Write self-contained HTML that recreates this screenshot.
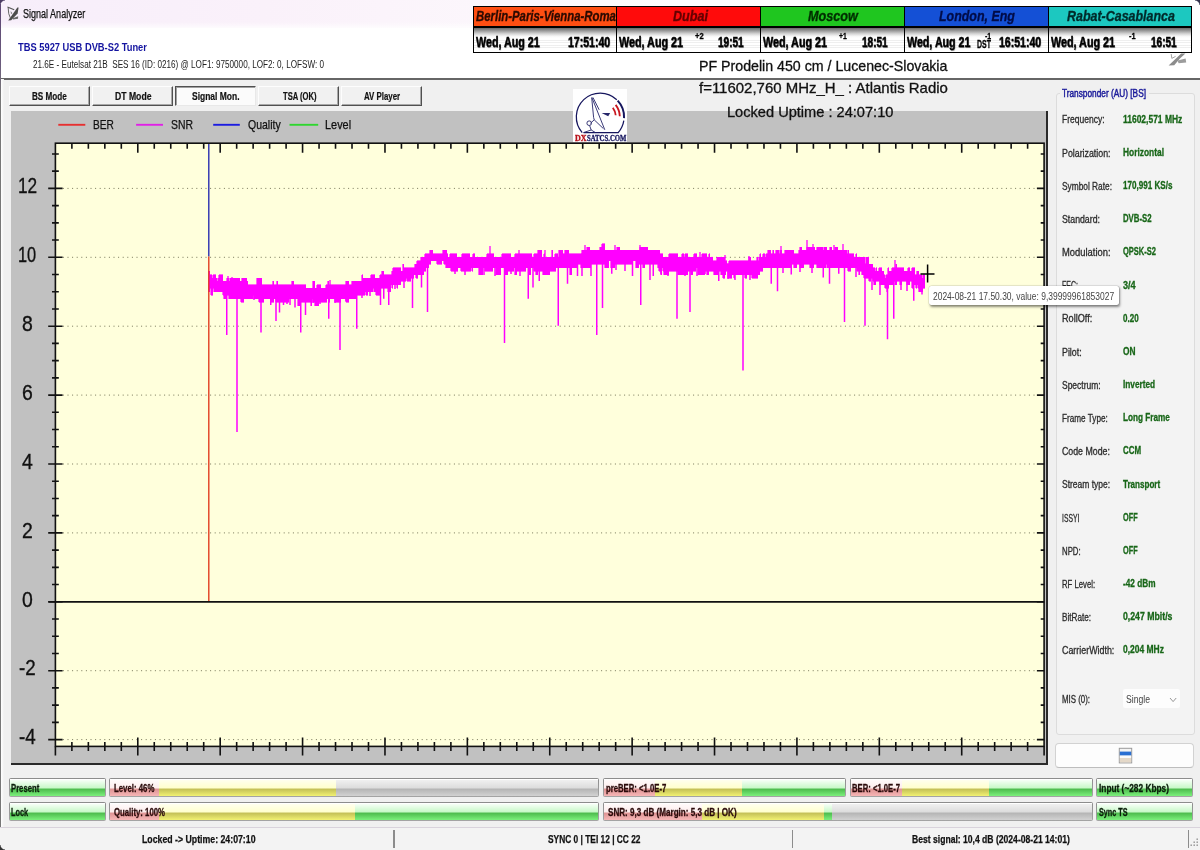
<!DOCTYPE html>
<html lang="en"><head><meta charset="utf-8"><title>Signal Analyzer</title>
<style>
html,body{margin:0;padding:0;}
body{width:1200px;height:850px;overflow:hidden;background:#f0f0f0;font-family:"Liberation Sans",sans-serif;}
#win{position:relative;width:1200px;height:850px;overflow:hidden;background:#f0f0f0;filter:blur(0.35px);}
.b{position:absolute;box-sizing:border-box;}
.t{position:absolute;white-space:pre;line-height:1;transform-origin:0 50%;}
svg{position:absolute;left:0;top:0;}

</style></head>
<body>
<div id="win">
<div class="b" style="left:0.00px;top:0.00px;width:1200.00px;height:79.00px;background:#fff;"></div>
<div class="b" style="left:0.00px;top:0.00px;width:1200.00px;height:28.00px;background:linear-gradient(90deg,#f7eefa 0%,#faf1fa 22%,#fcf7fc 42%,#ffffff 66%);"></div>
<div class="b" style="left:0.00px;top:22.00px;width:1200.00px;height:8.00px;background:linear-gradient(180deg,rgba(255,255,255,0),#fff);"></div>
<div class="b" style="left:0.00px;top:0.00px;width:5.00px;height:5.00px;background:radial-gradient(circle at 5px 5px,rgba(0,0,0,0) 3.8px,#4b3a63 5px);"></div>
<div class="b" style="left:1195.00px;top:0.00px;width:5.00px;height:5.00px;background:radial-gradient(circle at 0px 5px,rgba(0,0,0,0) 3.8px,#33334d 5px);"></div>
<svg width="30" height="30" viewBox="0 0 30 30" style="left:0;top:0"><path d="M8.2,20.4 L17.4,7.4 L18.6,7.6 L17.6,13.4 L11.2,20.2 Z" fill="#4c4c4c"/><path d="M7.4,7 L14.2,9.8" stroke="#555" stroke-width="1.2" fill="none"/><path d="M8.2,8 Q8.2,14.5 10.4,18" stroke="#666" stroke-width="1" fill="none"/><path d="M12.5,18.2 L18.2,16.2 L18,18.8 L13,19.4 Z" fill="#6a6a6a"/><path d="M10.6,11 L12.4,13.2 L11,14 Z" fill="#777"/></svg>
<span class="t" style="left:22.50px;top:8.44px;font-size:12px;color:#111;transform:scaleX(0.7520);-webkit-text-stroke:0.25px #111;">Signal Analyzer</span>
<span class="t" style="left:17.80px;top:42.33px;font-size:10.6px;color:#1414a0;font-weight:bold;transform:scaleX(0.8807);">TBS 5927 USB DVB-S2 Tuner</span>
<span class="t" style="left:32.80px;top:60.23px;font-size:10px;color:#222;transform:scaleX(0.8143);">21.6E - Eutelsat 21B  SES 16 (ID: 0216) @ LOF1: 9750000, LOF2: 0, LOFSW: 0</span>
<div class="b" style="left:0.00px;top:78.40px;width:1200.00px;height:1.40px;background:#666;"></div>
<div class="b" style="left:0.00px;top:4.00px;width:1.20px;height:842.00px;background:linear-gradient(180deg,#5c4674 0px,#6a5a7c 60px,#777 90px,#777 100%);"></div>
<div class="b" style="left:1.30px;top:79.00px;width:3.00px;height:771.00px;background:linear-gradient(90deg,#fff,#f0f0f0);"></div>
<div class="b" style="left:472.70px;top:5.50px;width:719.40px;height:47.30px;background:#000;"></div>
<div class="b" style="left:474.10px;top:6.90px;width:142.00px;height:19.60px;background:#ff4e12;"></div>
<div class="b" style="left:474.10px;top:27.70px;width:142.00px;height:24.10px;background:linear-gradient(180deg,#6a6a6a 0%,#9c9c9c 12%,#d4d4d4 24%,#f6f6f6 34%,#fff 42%,#fff 100%);"></div>
<div class="b" style="left:474.10px;top:35.50px;width:142.00px;height:16.30px;background:repeating-linear-gradient(180deg,rgba(255,255,255,0) 0px,rgba(255,255,255,0) 1.6px,rgba(228,228,228,.6) 1.6px,rgba(228,228,228,.6) 2.4px);"></div>
<span class="t" style="left:475.80px;top:8.13px;font-size:15.2px;color:#2c0a00;font-weight:bold;font-style:italic;transform:scaleX(0.7489);-webkit-text-stroke:0.35px #2c0a00;">Berlin-Paris-Vienna-Roma</span>
<div class="b" style="left:617.30px;top:6.90px;width:142.30px;height:19.60px;background:#ff0b0b;"></div>
<div class="b" style="left:617.30px;top:27.70px;width:142.30px;height:24.10px;background:linear-gradient(180deg,#6a6a6a 0%,#9c9c9c 12%,#d4d4d4 24%,#f6f6f6 34%,#fff 42%,#fff 100%);"></div>
<div class="b" style="left:617.30px;top:35.50px;width:142.30px;height:16.30px;background:repeating-linear-gradient(180deg,rgba(255,255,255,0) 0px,rgba(255,255,255,0) 1.6px,rgba(228,228,228,.6) 1.6px,rgba(228,228,228,.6) 2.4px);"></div>
<span class="t" style="left:672.50px;top:8.13px;font-size:15.2px;color:#640000;font-weight:bold;font-style:italic;transform:scaleX(0.8290);-webkit-text-stroke:0.35px #640000;">Dubai</span>
<div class="b" style="left:760.80px;top:6.90px;width:142.80px;height:19.60px;background:#1fc61f;"></div>
<div class="b" style="left:760.80px;top:27.70px;width:142.80px;height:24.10px;background:linear-gradient(180deg,#6a6a6a 0%,#9c9c9c 12%,#d4d4d4 24%,#f6f6f6 34%,#fff 42%,#fff 100%);"></div>
<div class="b" style="left:760.80px;top:35.50px;width:142.80px;height:16.30px;background:repeating-linear-gradient(180deg,rgba(255,255,255,0) 0px,rgba(255,255,255,0) 1.6px,rgba(228,228,228,.6) 1.6px,rgba(228,228,228,.6) 2.4px);"></div>
<span class="t" style="left:808.00px;top:8.13px;font-size:15.2px;color:#002e00;font-weight:bold;font-style:italic;transform:scaleX(0.8339);-webkit-text-stroke:0.35px #002e00;">Moscow</span>
<div class="b" style="left:904.80px;top:6.90px;width:142.80px;height:19.60px;background:#1450d6;"></div>
<div class="b" style="left:904.80px;top:27.70px;width:142.80px;height:24.10px;background:linear-gradient(180deg,#6a6a6a 0%,#9c9c9c 12%,#d4d4d4 24%,#f6f6f6 34%,#fff 42%,#fff 100%);"></div>
<div class="b" style="left:904.80px;top:35.50px;width:142.80px;height:16.30px;background:repeating-linear-gradient(180deg,rgba(255,255,255,0) 0px,rgba(255,255,255,0) 1.6px,rgba(228,228,228,.6) 1.6px,rgba(228,228,228,.6) 2.4px);"></div>
<span class="t" style="left:939.00px;top:8.13px;font-size:15.2px;color:#000c48;font-weight:bold;font-style:italic;transform:scaleX(0.8185);-webkit-text-stroke:0.35px #000c48;">London, Eng</span>
<div class="b" style="left:1048.80px;top:6.90px;width:142.30px;height:19.60px;background:#1cc8c0;"></div>
<div class="b" style="left:1048.80px;top:27.70px;width:142.30px;height:24.10px;background:linear-gradient(180deg,#6a6a6a 0%,#9c9c9c 12%,#d4d4d4 24%,#f6f6f6 34%,#fff 42%,#fff 100%);"></div>
<div class="b" style="left:1048.80px;top:35.50px;width:142.30px;height:16.30px;background:repeating-linear-gradient(180deg,rgba(255,255,255,0) 0px,rgba(255,255,255,0) 1.6px,rgba(228,228,228,.6) 1.6px,rgba(228,228,228,.6) 2.4px);"></div>
<span class="t" style="left:1067.30px;top:8.13px;font-size:15.2px;color:#002a2a;font-weight:bold;font-style:italic;transform:scaleX(0.8196);-webkit-text-stroke:0.35px #002a2a;">Rabat-Casablanca</span>
<span class="t" style="left:475.80px;top:34.87px;font-size:14.8px;color:#000;font-weight:bold;transform:scaleX(0.7240);text-shadow:0.6px 0.8px 1px rgba(0,0,0,.45);-webkit-text-stroke:0.5px #000;">Wed, Aug 21</span>
<span class="t" style="left:567.50px;top:34.87px;font-size:14.8px;color:#000;font-weight:bold;transform:scaleX(0.7124);text-shadow:0.6px 0.8px 1px rgba(0,0,0,.45);-webkit-text-stroke:0.5px #000;">17:51:40</span>
<span class="t" style="left:619.20px;top:34.87px;font-size:14.8px;color:#000;font-weight:bold;transform:scaleX(0.7274);text-shadow:0.6px 0.8px 1px rgba(0,0,0,.45);-webkit-text-stroke:0.5px #000;">Wed, Aug 21</span>
<span class="t" style="left:718.30px;top:34.87px;font-size:14.8px;color:#000;font-weight:bold;transform:scaleX(0.6790);text-shadow:0.6px 0.8px 1px rgba(0,0,0,.45);-webkit-text-stroke:0.5px #000;">19:51</span>
<span class="t" style="left:695.30px;top:31.00px;font-size:9.8px;color:#000;font-weight:bold;transform:scaleX(0.7786);-webkit-text-stroke:0.3px #000;">+2</span>
<span class="t" style="left:762.80px;top:34.87px;font-size:14.8px;color:#000;font-weight:bold;transform:scaleX(0.7274);text-shadow:0.6px 0.8px 1px rgba(0,0,0,.45);-webkit-text-stroke:0.5px #000;">Wed, Aug 21</span>
<span class="t" style="left:862.00px;top:34.87px;font-size:14.8px;color:#000;font-weight:bold;transform:scaleX(0.6790);text-shadow:0.6px 0.8px 1px rgba(0,0,0,.45);-webkit-text-stroke:0.5px #000;">18:51</span>
<span class="t" style="left:839.20px;top:31.00px;font-size:9.8px;color:#000;font-weight:bold;transform:scaleX(0.6981);-webkit-text-stroke:0.3px #000;">+1</span>
<span class="t" style="left:906.80px;top:34.87px;font-size:14.8px;color:#000;font-weight:bold;transform:scaleX(0.7217);text-shadow:0.6px 0.8px 1px rgba(0,0,0,.45);-webkit-text-stroke:0.5px #000;">Wed, Aug 21</span>
<span class="t" style="left:999.00px;top:34.87px;font-size:14.8px;color:#000;font-weight:bold;transform:scaleX(0.7124);text-shadow:0.6px 0.8px 1px rgba(0,0,0,.45);-webkit-text-stroke:0.5px #000;">16:51:40</span>
<span class="t" style="left:984.80px;top:31.00px;font-size:9.8px;color:#000;font-weight:bold;transform:scaleX(0.7116);-webkit-text-stroke:0.3px #000;">-1</span>
<span class="t" style="left:976.90px;top:39.43px;font-size:11.3px;color:#000;font-weight:bold;transform:scaleX(0.6150);-webkit-text-stroke:0.3px #000;">DST</span>
<span class="t" style="left:1050.50px;top:34.87px;font-size:14.8px;color:#000;font-weight:bold;transform:scaleX(0.7274);text-shadow:0.6px 0.8px 1px rgba(0,0,0,.45);-webkit-text-stroke:0.5px #000;">Wed, Aug 21</span>
<span class="t" style="left:1150.50px;top:34.87px;font-size:14.8px;color:#000;font-weight:bold;transform:scaleX(0.6790);text-shadow:0.6px 0.8px 1px rgba(0,0,0,.45);-webkit-text-stroke:0.5px #000;">16:51</span>
<span class="t" style="left:1128.70px;top:31.00px;font-size:9.8px;color:#000;font-weight:bold;transform:scaleX(0.7575);-webkit-text-stroke:0.3px #000;">-1</span>
<svg width="24" height="18" viewBox="0 0 24 18" style="left:1166px;top:51px"><path d="M2.6,14.6 L15.2,2.6 L19.4,2.4 L14.2,7.2 L8.2,14.2 Z" fill="#8c8c8c"/><path d="M5.2,3 L5.8,7.4 L9.6,5.4" stroke="#9a9a9a" stroke-width="0.9" fill="none"/><path d="M11.6,9.6 L19.6,7.6 L20.2,11.6 L12.6,12.2 Z" fill="#9c9c9c"/></svg>
<div class="b" style="left:9.20px;top:85.80px;width:81.00px;height:20.00px;background:#f1f1f1;border-top:1px solid #fdfdfd;border-left:1px solid #fdfdfd;border-right:1.6px solid #505050;border-bottom:1.8px solid #505050;box-shadow:inset -1px -1px 0 #a8a8a8;"></div>
<span class="t" style="left:32.30px;top:91.80px;font-size:10.4px;color:#111;font-weight:bold;transform:scaleX(0.7822);-webkit-text-stroke:0.2px #111;">BS Mode</span>
<div class="b" style="left:92.30px;top:85.80px;width:80.30px;height:20.00px;background:#f1f1f1;border-top:1px solid #fdfdfd;border-left:1px solid #fdfdfd;border-right:1.6px solid #505050;border-bottom:1.8px solid #505050;box-shadow:inset -1px -1px 0 #a8a8a8;"></div>
<span class="t" style="left:114.50px;top:91.80px;font-size:10.4px;color:#111;font-weight:bold;transform:scaleX(0.8314);-webkit-text-stroke:0.2px #111;">DT Mode</span>
<div class="b" style="left:175.20px;top:85.80px;width:80.60px;height:20.00px;background:#fbfbfb;border-top:1.6px solid #505050;border-left:1.6px solid #505050;border-right:1px solid #e8e8e8;border-bottom:1px solid #e8e8e8;box-shadow:inset 1px 1px 0 #a0a0a0;"></div>
<span class="t" style="left:192.20px;top:92.30px;font-size:10.4px;color:#111;font-weight:bold;transform:scaleX(0.8158);-webkit-text-stroke:0.2px #111;">Signal Mon.</span>
<div class="b" style="left:258.00px;top:85.80px;width:80.60px;height:20.00px;background:#f1f1f1;border-top:1px solid #fdfdfd;border-left:1px solid #fdfdfd;border-right:1.6px solid #505050;border-bottom:1.8px solid #505050;box-shadow:inset -1px -1px 0 #a8a8a8;"></div>
<span class="t" style="left:283.20px;top:91.80px;font-size:10.4px;color:#111;font-weight:bold;transform:scaleX(0.7331);-webkit-text-stroke:0.2px #111;">TSA (OK)</span>
<div class="b" style="left:341.40px;top:85.80px;width:80.40px;height:20.00px;background:#f1f1f1;border-top:1px solid #fdfdfd;border-left:1px solid #fdfdfd;border-right:1.6px solid #505050;border-bottom:1.8px solid #505050;box-shadow:inset -1px -1px 0 #a8a8a8;"></div>
<span class="t" style="left:363.70px;top:91.80px;font-size:10.4px;color:#111;font-weight:bold;transform:scaleX(0.7575);-webkit-text-stroke:0.2px #111;">AV Player</span>
<div class="b" style="left:10.60px;top:110.60px;width:1036.20px;height:652.80px;background:#c1c1c1;"></div>
<div class="b" style="left:10.60px;top:763.00px;width:1037.00px;height:1.70px;background:#2a2a2a;"></div>
<div class="b" style="left:1046.10px;top:110.60px;width:1.50px;height:654.10px;background:#2a2a2a;"></div>
<svg width="1200" height="850" viewBox="0 0 1200 850"><rect x="55.4" y="143.2" width="988.6999999999999" height="603.2" fill="#ffffdc"/>
<line x1="62.9" x2="1037.6" y1="188.40" y2="188.40" stroke="#77775a" stroke-width="1" stroke-dasharray="1 3.6"/>
<line x1="62.9" x2="1037.6" y1="257.30" y2="257.30" stroke="#77775a" stroke-width="1" stroke-dasharray="1 3.6"/>
<line x1="62.9" x2="1037.6" y1="326.20" y2="326.20" stroke="#77775a" stroke-width="1" stroke-dasharray="1 3.6"/>
<line x1="62.9" x2="1037.6" y1="395.10" y2="395.10" stroke="#77775a" stroke-width="1" stroke-dasharray="1 3.6"/>
<line x1="62.9" x2="1037.6" y1="464.00" y2="464.00" stroke="#77775a" stroke-width="1" stroke-dasharray="1 3.6"/>
<line x1="62.9" x2="1037.6" y1="532.90" y2="532.90" stroke="#77775a" stroke-width="1" stroke-dasharray="1 3.6"/>
<line x1="62.9" x2="1037.6" y1="670.70" y2="670.70" stroke="#77775a" stroke-width="1" stroke-dasharray="1 3.6"/>
<line x1="62.9" x2="1037.6" y1="739.60" y2="739.60" stroke="#77775a" stroke-width="1" stroke-dasharray="1 3.6"/>
<path d="M208.8,271.1 V271.1 H209.8 V274.5 H210.8 V274.5 H211.8 V278.0 H212.8 V274.5 H213.8 V274.5 H214.8 V274.5 H215.8 V278.0 H216.8 V281.4 H217.8 V278.0 H218.8 V274.5 H219.8 V274.5 H220.8 V274.5 H221.8 V274.5 H222.8 V281.4 H223.8 V281.4 H224.8 V281.4 H225.8 V281.4 H226.8 V278.0 H227.8 V278.0 H228.8 V281.4 H229.8 V278.0 H230.8 V278.0 H231.8 V278.0 H232.8 V278.0 H233.8 V278.0 H234.8 V278.0 H235.8 V278.0 H236.8 V278.0 H237.8 V278.0 H238.8 V278.0 H239.8 V281.4 H240.8 V281.4 H241.8 V278.0 H242.8 V278.0 H243.8 V278.0 H244.8 V278.0 H245.8 V278.0 H246.8 V281.4 H247.8 V284.9 H248.8 V284.9 H249.8 V284.9 H250.8 V284.9 H251.8 V284.9 H252.8 V284.9 H253.8 V284.9 H254.8 V284.9 H255.8 V284.9 H256.8 V278.0 H257.8 V278.0 H258.8 V278.0 H259.8 V278.0 H260.8 V278.0 H261.8 V284.9 H262.8 V284.9 H263.8 V284.9 H264.8 V284.9 H265.8 V284.9 H266.8 V284.9 H267.8 V284.9 H268.8 V284.9 H269.8 V284.9 H270.8 V284.9 H271.8 V284.9 H272.8 V281.4 H273.8 V284.9 H274.8 V284.9 H275.8 V284.9 H276.8 V281.4 H277.8 V284.9 H278.8 V284.9 H279.8 V284.9 H280.8 V284.9 H281.8 V284.9 H282.8 V284.9 H283.8 V284.9 H284.8 V284.9 H285.8 V284.9 H286.8 V284.9 H287.8 V284.9 H288.8 V284.9 H289.8 V284.9 H290.8 V284.9 H291.8 V281.4 H292.8 V281.4 H293.8 V284.9 H294.8 V284.9 H295.8 V284.9 H296.8 V284.9 H297.8 V284.9 H298.8 V284.9 H299.8 V284.9 H300.8 V284.9 H301.8 V284.9 H302.8 V284.9 H303.8 V284.9 H304.8 V284.9 H305.8 V288.3 H306.8 V288.3 H307.8 V288.3 H308.8 V288.3 H309.8 V288.3 H310.8 V288.3 H311.8 V288.3 H312.8 V281.4 H313.8 V281.4 H314.8 V288.3 H315.8 V288.3 H316.8 V284.9 H317.8 V284.9 H318.8 V284.9 H319.8 V284.9 H320.8 V288.3 H321.8 V288.3 H322.8 V288.3 H323.8 V288.3 H324.8 V288.3 H325.8 V284.9 H326.8 V284.9 H327.8 V281.4 H328.8 V284.9 H329.8 V284.9 H330.8 V284.9 H331.8 V284.9 H332.8 V284.9 H333.8 V284.9 H334.8 V284.9 H335.8 V284.9 H336.8 V284.9 H337.8 V284.9 H338.8 V284.9 H339.8 V284.9 H340.8 V284.9 H341.8 V284.9 H342.8 V284.9 H343.8 V284.9 H344.8 V284.9 H345.8 V281.4 H346.8 V281.4 H347.8 V281.4 H348.8 V284.9 H349.8 V284.9 H350.8 V284.9 H351.8 V281.4 H352.8 V281.4 H353.8 V281.4 H354.8 V281.4 H355.8 V281.4 H356.8 V281.4 H357.8 V281.4 H358.8 V281.4 H359.8 V281.4 H360.8 V281.4 H361.8 V274.5 H362.8 V278.0 H363.8 V278.0 H364.8 V278.0 H365.8 V278.0 H366.8 V278.0 H367.8 V278.0 H368.8 V278.0 H369.8 V278.0 H370.8 V274.5 H371.8 V274.5 H372.8 V274.5 H373.8 V274.5 H374.8 V278.0 H375.8 V278.0 H376.8 V278.0 H377.8 V278.0 H378.8 V278.0 H379.8 V274.5 H380.8 V274.5 H381.8 V271.1 H382.8 V271.1 H383.8 V274.5 H384.8 V274.5 H385.8 V274.5 H386.8 V274.5 H387.8 V274.5 H388.8 V274.5 H389.8 V274.5 H390.8 V274.5 H391.8 V271.1 H392.8 V267.6 H393.8 V267.6 H394.8 V267.6 H395.8 V267.6 H396.8 V267.6 H397.8 V267.6 H398.8 V267.6 H399.8 V267.6 H400.8 V271.1 H401.8 V271.1 H402.8 V264.2 H403.8 V267.6 H404.8 V267.6 H405.8 V267.6 H406.8 V267.6 H407.8 V267.6 H408.8 V267.6 H409.8 V267.6 H410.8 V267.6 H411.8 V267.6 H412.8 V267.6 H413.8 V267.6 H414.8 V264.2 H415.8 V264.2 H416.8 V260.7 H417.8 V260.7 H418.8 V260.7 H419.8 V260.7 H420.8 V257.3 H421.8 V257.3 H422.8 V257.3 H423.8 V257.3 H424.8 V253.9 H425.8 V253.9 H426.8 V253.9 H427.8 V253.9 H428.8 V253.9 H429.8 V250.4 H430.8 V250.4 H431.8 V250.4 H432.8 V253.9 H433.8 V253.9 H434.8 V253.9 H435.8 V253.9 H436.8 V253.9 H437.8 V253.9 H438.8 V253.9 H439.8 V253.9 H440.8 V253.9 H441.8 V253.9 H442.8 V250.4 H443.8 V250.4 H444.8 V250.4 H445.8 V250.4 H446.8 V253.9 H447.8 V257.3 H448.8 V257.3 H449.8 V253.9 H450.8 V253.9 H451.8 V253.9 H452.8 V253.9 H453.8 V253.9 H454.8 V253.9 H455.8 V253.9 H456.8 V257.3 H457.8 V257.3 H458.8 V257.3 H459.8 V257.3 H460.8 V257.3 H461.8 V253.9 H462.8 V253.9 H463.8 V253.9 H464.8 V253.9 H465.8 V253.9 H466.8 V253.9 H467.8 V253.9 H468.8 V253.9 H469.8 V257.3 H470.8 V257.3 H471.8 V257.3 H472.8 V253.9 H473.8 V253.9 H474.8 V257.3 H475.8 V257.3 H476.8 V257.3 H477.8 V257.3 H478.8 V257.3 H479.8 V257.3 H480.8 V257.3 H481.8 V257.3 H482.8 V257.3 H483.8 V257.3 H484.8 V257.3 H485.8 V257.3 H486.8 V253.9 H487.8 V253.9 H488.8 V253.9 H489.8 V253.9 H490.8 V253.9 H491.8 V253.9 H492.8 V253.9 H493.8 V257.3 H494.8 V257.3 H495.8 V257.3 H496.8 V257.3 H497.8 V257.3 H498.8 V257.3 H499.8 V257.3 H500.8 V257.3 H501.8 V253.9 H502.8 V253.9 H503.8 V253.9 H504.8 V253.9 H505.8 V253.9 H506.8 V253.9 H507.8 V253.9 H508.8 V253.9 H509.8 V253.9 H510.8 V257.3 H511.8 V257.3 H512.8 V257.3 H513.8 V257.3 H514.8 V253.9 H515.8 V253.9 H516.8 V253.9 H517.8 V253.9 H518.8 V253.9 H519.8 V253.9 H520.8 V253.9 H521.8 V253.9 H522.8 V253.9 H523.8 V253.9 H524.8 V253.9 H525.8 V253.9 H526.8 V253.9 H527.8 V253.9 H528.8 V253.9 H529.8 V253.9 H530.8 V253.9 H531.8 V257.3 H532.8 V257.3 H533.8 V253.9 H534.8 V253.9 H535.8 V253.9 H536.8 V253.9 H537.8 V250.4 H538.8 V250.4 H539.8 V250.4 H540.8 V250.4 H541.8 V257.3 H542.8 V257.3 H543.8 V253.9 H544.8 V257.3 H545.8 V257.3 H546.8 V257.3 H547.8 V257.3 H548.8 V257.3 H549.8 V257.3 H550.8 V257.3 H551.8 V250.4 H552.8 V257.3 H553.8 V257.3 H554.8 V253.9 H555.8 V253.9 H556.8 V253.9 H557.8 V257.3 H558.8 V250.4 H559.8 V250.4 H560.8 V250.4 H561.8 V250.4 H562.8 V253.9 H563.8 V253.9 H564.8 V250.4 H565.8 V250.4 H566.8 V250.4 H567.8 V250.4 H568.8 V253.9 H569.8 V253.9 H570.8 V253.9 H571.8 V253.9 H572.8 V253.9 H573.8 V253.9 H574.8 V253.9 H575.8 V253.9 H576.8 V253.9 H577.8 V253.9 H578.8 V253.9 H579.8 V253.9 H580.8 V253.9 H581.8 V250.4 H582.8 V250.4 H583.8 V250.4 H584.8 V250.4 H585.8 V250.4 H586.8 V247.0 H587.8 V247.0 H588.8 V247.0 H589.8 V250.4 H590.8 V250.4 H591.8 V250.4 H592.8 V250.4 H593.8 V250.4 H594.8 V250.4 H595.8 V250.4 H596.8 V250.4 H597.8 V250.4 H598.8 V250.4 H599.8 V247.0 H600.8 V247.0 H601.8 V243.5 H602.8 V243.5 H603.8 V243.5 H604.8 V250.4 H605.8 V250.4 H606.8 V250.4 H607.8 V250.4 H608.8 V250.4 H609.8 V250.4 H610.8 V250.4 H611.8 V250.4 H612.8 V250.4 H613.8 V250.4 H614.8 V250.4 H615.8 V250.4 H616.8 V247.0 H617.8 V247.0 H618.8 V247.0 H619.8 V250.4 H620.8 V250.4 H621.8 V250.4 H622.8 V250.4 H623.8 V250.4 H624.8 V250.4 H625.8 V250.4 H626.8 V250.4 H627.8 V250.4 H628.8 V250.4 H629.8 V250.4 H630.8 V250.4 H631.8 V250.4 H632.8 V250.4 H633.8 V250.4 H634.8 V250.4 H635.8 V250.4 H636.8 V250.4 H637.8 V250.4 H638.8 V250.4 H639.8 V247.0 H640.8 V247.0 H641.8 V247.0 H642.8 V247.0 H643.8 V247.0 H644.8 V247.0 H645.8 V247.0 H646.8 V247.0 H647.8 V250.4 H648.8 V250.4 H649.8 V250.4 H650.8 V250.4 H651.8 V250.4 H652.8 V250.4 H653.8 V250.4 H654.8 V250.4 H655.8 V250.4 H656.8 V250.4 H657.8 V250.4 H658.8 V250.4 H659.8 V253.9 H660.8 V253.9 H661.8 V253.9 H662.8 V257.3 H663.8 V257.3 H664.8 V257.3 H665.8 V257.3 H666.8 V257.3 H667.8 V257.3 H668.8 V253.9 H669.8 V253.9 H670.8 V253.9 H671.8 V253.9 H672.8 V253.9 H673.8 V253.9 H674.8 V253.9 H675.8 V253.9 H676.8 V253.9 H677.8 V257.3 H678.8 V257.3 H679.8 V257.3 H680.8 V257.3 H681.8 V253.9 H682.8 V253.9 H683.8 V257.3 H684.8 V253.9 H685.8 V253.9 H686.8 V253.9 H687.8 V257.3 H688.8 V257.3 H689.8 V257.3 H690.8 V257.3 H691.8 V257.3 H692.8 V257.3 H693.8 V253.9 H694.8 V253.9 H695.8 V253.9 H696.8 V257.3 H697.8 V257.3 H698.8 V257.3 H699.8 V257.3 H700.8 V257.3 H701.8 V253.9 H702.8 V253.9 H703.8 V253.9 H704.8 V253.9 H705.8 V253.9 H706.8 V257.3 H707.8 V257.3 H708.8 V253.9 H709.8 V257.3 H710.8 V257.3 H711.8 V257.3 H712.8 V260.7 H713.8 V260.7 H714.8 V260.7 H715.8 V260.7 H716.8 V257.3 H717.8 V257.3 H718.8 V257.3 H719.8 V257.3 H720.8 V257.3 H721.8 V257.3 H722.8 V257.3 H723.8 V257.3 H724.8 V260.7 H725.8 V260.7 H726.8 V264.2 H727.8 V264.2 H728.8 V260.7 H729.8 V260.7 H730.8 V260.7 H731.8 V260.7 H732.8 V260.7 H733.8 V260.7 H734.8 V260.7 H735.8 V260.7 H736.8 V260.7 H737.8 V260.7 H738.8 V260.7 H739.8 V260.7 H740.8 V260.7 H741.8 V260.7 H742.8 V260.7 H743.8 V260.7 H744.8 V260.7 H745.8 V260.7 H746.8 V260.7 H747.8 V260.7 H748.8 V257.3 H749.8 V257.3 H750.8 V260.7 H751.8 V260.7 H752.8 V260.7 H753.8 V260.7 H754.8 V260.7 H755.8 V260.7 H756.8 V257.3 H757.8 V260.7 H758.8 V257.3 H759.8 V253.9 H760.8 V257.3 H761.8 V257.3 H762.8 V253.9 H763.8 V253.9 H764.8 V257.3 H765.8 V253.9 H766.8 V253.9 H767.8 V250.4 H768.8 V250.4 H769.8 V250.4 H770.8 V253.9 H771.8 V253.9 H772.8 V250.4 H773.8 V253.9 H774.8 V253.9 H775.8 V250.4 H776.8 V250.4 H777.8 V250.4 H778.8 V253.9 H779.8 V250.4 H780.8 V250.4 H781.8 V253.9 H782.8 V253.9 H783.8 V253.9 H784.8 V250.4 H785.8 V250.4 H786.8 V250.4 H787.8 V250.4 H788.8 V250.4 H789.8 V250.4 H790.8 V250.4 H791.8 V250.4 H792.8 V250.4 H793.8 V253.9 H794.8 V253.9 H795.8 V253.9 H796.8 V253.9 H797.8 V253.9 H798.8 V250.4 H799.8 V247.0 H800.8 V247.0 H801.8 V250.4 H802.8 V250.4 H803.8 V250.4 H804.8 V250.4 H805.8 V250.4 H806.8 V247.0 H807.8 V247.0 H808.8 V247.0 H809.8 V247.0 H810.8 V247.0 H811.8 V247.0 H812.8 V247.0 H813.8 V247.0 H814.8 V250.4 H815.8 V250.4 H816.8 V247.0 H817.8 V247.0 H818.8 V247.0 H819.8 V247.0 H820.8 V247.0 H821.8 V247.0 H822.8 V250.4 H823.8 V247.0 H824.8 V247.0 H825.8 V247.0 H826.8 V250.4 H827.8 V250.4 H828.8 V250.4 H829.8 V247.0 H830.8 V247.0 H831.8 V250.4 H832.8 V250.4 H833.8 V250.4 H834.8 V247.0 H835.8 V247.0 H836.8 V247.0 H837.8 V250.4 H838.8 V250.4 H839.8 V250.4 H840.8 V250.4 H841.8 V250.4 H842.8 V250.4 H843.8 V250.4 H844.8 V250.4 H845.8 V250.4 H846.8 V253.9 H847.8 V250.4 H848.8 V253.9 H849.8 V253.9 H850.8 V253.9 H851.8 V253.9 H852.8 V253.9 H853.8 V257.3 H854.8 V257.3 H855.8 V253.9 H856.8 V257.3 H857.8 V257.3 H858.8 V257.3 H859.8 V257.3 H860.8 V257.3 H861.8 V257.3 H862.8 V257.3 H863.8 V257.3 H864.8 V264.2 H865.8 V257.3 H866.8 V257.3 H867.8 V257.3 H868.8 V264.2 H869.8 V264.2 H870.8 V264.2 H871.8 V264.2 H872.8 V267.6 H873.8 V267.6 H874.8 V271.1 H875.8 V267.6 H876.8 V271.1 H877.8 V271.1 H878.8 V267.6 H879.8 V267.6 H880.8 V267.6 H881.8 V271.1 H882.8 V271.1 H883.8 V274.5 H884.8 V278.0 H885.8 V274.5 H886.8 V274.5 H887.8 V267.6 H888.8 V271.1 H889.8 V271.1 H890.8 V271.1 H891.8 V267.6 H892.8 V267.6 H893.8 V267.6 H894.8 V267.6 H895.8 V264.2 H896.8 V267.6 H897.8 V267.6 H898.8 V267.6 H899.8 V267.6 H900.8 V267.6 H901.8 V267.6 H902.8 V267.6 H903.8 V271.1 H904.8 V271.1 H905.8 V271.1 H906.8 V271.1 H907.8 V267.6 H908.8 V267.6 H909.8 V271.1 H910.8 V271.1 H911.8 V267.6 H912.8 V267.6 H913.8 V267.6 H914.8 V274.5 H915.8 V274.5 H916.8 V271.1 H917.8 V271.1 H918.8 V274.5 H919.8 V274.5 H920.8 V274.5 H921.8 V278.0 H922.8 V274.5 H923.8 V274.5 H924.8 V288.3 H923.8 V288.3 H922.8 V291.7 H921.8 V291.7 H920.8 V291.7 H919.8 V291.7 H918.8 V288.3 H917.8 V284.9 H916.8 V288.3 H915.8 V284.9 H914.8 V284.9 H913.8 V288.3 H912.8 V288.3 H911.8 V281.4 H910.8 V281.4 H909.8 V284.9 H908.8 V284.9 H907.8 V284.9 H906.8 V281.4 H905.8 V281.4 H904.8 V281.4 H903.8 V281.4 H902.8 V281.4 H901.8 V284.9 H900.8 V284.9 H899.8 V281.4 H898.8 V281.4 H897.8 V281.4 H896.8 V284.9 H895.8 V284.9 H894.8 V281.4 H893.8 V284.9 H892.8 V284.9 H891.8 V284.9 H890.8 V284.9 H889.8 V284.9 H888.8 V288.3 H887.8 V291.7 H886.8 V288.3 H885.8 V288.3 H884.8 V284.9 H883.8 V284.9 H882.8 V284.9 H881.8 V284.9 H880.8 V284.9 H879.8 V281.4 H878.8 V281.4 H877.8 V281.4 H876.8 V281.4 H875.8 V284.9 H874.8 V284.9 H873.8 V281.4 H872.8 V278.0 H871.8 V278.0 H870.8 V281.4 H869.8 V281.4 H868.8 V278.0 H867.8 V278.0 H866.8 V278.0 H865.8 V278.0 H864.8 V278.0 H863.8 V274.5 H862.8 V274.5 H861.8 V271.1 H860.8 V271.1 H859.8 V274.5 H858.8 V271.1 H857.8 V271.1 H856.8 V267.6 H855.8 V267.6 H854.8 V267.6 H853.8 V267.6 H852.8 V267.6 H851.8 V267.6 H850.8 V271.1 H849.8 V271.1 H848.8 V271.1 H847.8 V267.6 H846.8 V267.6 H845.8 V267.6 H844.8 V267.6 H843.8 V267.6 H842.8 V267.6 H841.8 V267.6 H840.8 V267.6 H839.8 V267.6 H838.8 V267.6 H837.8 V267.6 H836.8 V267.6 H835.8 V267.6 H834.8 V267.6 H833.8 V267.6 H832.8 V267.6 H831.8 V267.6 H830.8 V267.6 H829.8 V267.6 H828.8 V267.6 H827.8 V267.6 H826.8 V264.2 H825.8 V267.6 H824.8 V267.6 H823.8 V267.6 H822.8 V267.6 H821.8 V267.6 H820.8 V267.6 H819.8 V267.6 H818.8 V267.6 H817.8 V267.6 H816.8 V264.2 H815.8 V264.2 H814.8 V264.2 H813.8 V267.6 H812.8 V267.6 H811.8 V267.6 H810.8 V267.6 H809.8 V264.2 H808.8 V264.2 H807.8 V264.2 H806.8 V264.2 H805.8 V264.2 H804.8 V264.2 H803.8 V267.6 H802.8 V267.6 H801.8 V267.6 H800.8 V267.6 H799.8 V264.2 H798.8 V264.2 H797.8 V264.2 H796.8 V267.6 H795.8 V267.6 H794.8 V267.6 H793.8 V264.2 H792.8 V264.2 H791.8 V264.2 H790.8 V267.6 H789.8 V267.6 H788.8 V267.6 H787.8 V267.6 H786.8 V267.6 H785.8 V267.6 H784.8 V267.6 H783.8 V267.6 H782.8 V267.6 H781.8 V267.6 H780.8 V267.6 H779.8 V267.6 H778.8 V267.6 H777.8 V267.6 H776.8 V267.6 H775.8 V267.6 H774.8 V267.6 H773.8 V267.6 H772.8 V267.6 H771.8 V267.6 H770.8 V267.6 H769.8 V267.6 H768.8 V267.6 H767.8 V267.6 H766.8 V267.6 H765.8 V267.6 H764.8 V267.6 H763.8 V267.6 H762.8 V271.1 H761.8 V271.1 H760.8 V271.1 H759.8 V274.5 H758.8 V274.5 H757.8 V278.0 H756.8 V278.0 H755.8 V278.0 H754.8 V278.0 H753.8 V278.0 H752.8 V278.0 H751.8 V274.5 H750.8 V274.5 H749.8 V274.5 H748.8 V274.5 H747.8 V274.5 H746.8 V278.0 H745.8 V278.0 H744.8 V274.5 H743.8 V274.5 H742.8 V274.5 H741.8 V274.5 H740.8 V274.5 H739.8 V274.5 H738.8 V274.5 H737.8 V274.5 H736.8 V274.5 H735.8 V274.5 H734.8 V278.0 H733.8 V274.5 H732.8 V274.5 H731.8 V278.0 H730.8 V278.0 H729.8 V278.0 H728.8 V278.0 H727.8 V271.1 H726.8 V271.1 H725.8 V274.5 H724.8 V278.0 H723.8 V278.0 H722.8 V274.5 H721.8 V274.5 H720.8 V271.1 H719.8 V271.1 H718.8 V271.1 H717.8 V274.5 H716.8 V274.5 H715.8 V274.5 H714.8 V274.5 H713.8 V271.1 H712.8 V271.1 H711.8 V271.1 H710.8 V271.1 H709.8 V271.1 H708.8 V274.5 H707.8 V274.5 H706.8 V271.1 H705.8 V271.1 H704.8 V274.5 H703.8 V274.5 H702.8 V274.5 H701.8 V274.5 H700.8 V274.5 H699.8 V274.5 H698.8 V274.5 H697.8 V267.6 H696.8 V267.6 H695.8 V271.1 H694.8 V271.1 H693.8 V271.1 H692.8 V274.5 H691.8 V274.5 H690.8 V271.1 H689.8 V271.1 H688.8 V271.1 H687.8 V274.5 H686.8 V274.5 H685.8 V274.5 H684.8 V274.5 H683.8 V274.5 H682.8 V274.5 H681.8 V274.5 H680.8 V274.5 H679.8 V274.5 H678.8 V274.5 H677.8 V271.1 H676.8 V271.1 H675.8 V271.1 H674.8 V271.1 H673.8 V271.1 H672.8 V271.1 H671.8 V271.1 H670.8 V271.1 H669.8 V271.1 H668.8 V274.5 H667.8 V274.5 H666.8 V274.5 H665.8 V274.5 H664.8 V274.5 H663.8 V271.1 H662.8 V267.6 H661.8 V274.5 H660.8 V271.1 H659.8 V271.1 H658.8 V267.6 H657.8 V264.2 H656.8 V264.2 H655.8 V264.2 H654.8 V264.2 H653.8 V264.2 H652.8 V264.2 H651.8 V264.2 H650.8 V264.2 H649.8 V264.2 H648.8 V264.2 H647.8 V264.2 H646.8 V264.2 H645.8 V264.2 H644.8 V267.6 H643.8 V267.6 H642.8 V264.2 H641.8 V264.2 H640.8 V264.2 H639.8 V264.2 H638.8 V267.6 H637.8 V267.6 H636.8 V267.6 H635.8 V260.7 H634.8 V260.7 H633.8 V260.7 H632.8 V264.2 H631.8 V264.2 H630.8 V264.2 H629.8 V264.2 H628.8 V264.2 H627.8 V264.2 H626.8 V264.2 H625.8 V264.2 H624.8 V264.2 H623.8 V264.2 H622.8 V264.2 H621.8 V264.2 H620.8 V264.2 H619.8 V264.2 H618.8 V264.2 H617.8 V264.2 H616.8 V264.2 H615.8 V264.2 H614.8 V267.6 H613.8 V267.6 H612.8 V267.6 H611.8 V267.6 H610.8 V260.7 H609.8 V260.7 H608.8 V267.6 H607.8 V267.6 H606.8 V267.6 H605.8 V267.6 H604.8 V264.2 H603.8 V264.2 H602.8 V264.2 H601.8 V264.2 H600.8 V264.2 H599.8 V264.2 H598.8 V264.2 H597.8 V264.2 H596.8 V264.2 H595.8 V264.2 H594.8 V264.2 H593.8 V264.2 H592.8 V264.2 H591.8 V264.2 H590.8 V267.6 H589.8 V267.6 H588.8 V267.6 H587.8 V267.6 H586.8 V267.6 H585.8 V267.6 H584.8 V267.6 H583.8 V267.6 H582.8 V267.6 H581.8 V267.6 H580.8 V264.2 H579.8 V264.2 H578.8 V264.2 H577.8 V264.2 H576.8 V267.6 H575.8 V267.6 H574.8 V267.6 H573.8 V267.6 H572.8 V267.6 H571.8 V274.5 H570.8 V274.5 H569.8 V267.6 H568.8 V267.6 H567.8 V267.6 H566.8 V267.6 H565.8 V267.6 H564.8 V267.6 H563.8 V267.6 H562.8 V267.6 H561.8 V267.6 H560.8 V267.6 H559.8 V267.6 H558.8 V267.6 H557.8 V267.6 H556.8 V267.6 H555.8 V271.1 H554.8 V271.1 H553.8 V271.1 H552.8 V271.1 H551.8 V271.1 H550.8 V271.1 H549.8 V274.5 H548.8 V274.5 H547.8 V274.5 H546.8 V274.5 H545.8 V274.5 H544.8 V274.5 H543.8 V274.5 H542.8 V271.1 H541.8 V271.1 H540.8 V271.1 H539.8 V271.1 H538.8 V271.1 H537.8 V274.5 H536.8 V274.5 H535.8 V271.1 H534.8 V271.1 H533.8 V267.6 H532.8 V267.6 H531.8 V267.6 H530.8 V274.5 H529.8 V274.5 H528.8 V267.6 H527.8 V267.6 H526.8 V267.6 H525.8 V271.1 H524.8 V271.1 H523.8 V271.1 H522.8 V271.1 H521.8 V271.1 H520.8 V271.1 H519.8 V271.1 H518.8 V271.1 H517.8 V271.1 H516.8 V274.5 H515.8 V274.5 H514.8 V267.6 H513.8 V271.1 H512.8 V271.1 H511.8 V271.1 H510.8 V271.1 H509.8 V271.1 H508.8 V271.1 H507.8 V274.5 H506.8 V274.5 H505.8 V274.5 H504.8 V267.6 H503.8 V267.6 H502.8 V267.6 H501.8 V267.6 H500.8 V274.5 H499.8 V274.5 H498.8 V274.5 H497.8 V274.5 H496.8 V274.5 H495.8 V267.6 H494.8 V267.6 H493.8 V267.6 H492.8 V271.1 H491.8 V271.1 H490.8 V271.1 H489.8 V271.1 H488.8 V271.1 H487.8 V271.1 H486.8 V271.1 H485.8 V271.1 H484.8 V267.6 H483.8 V267.6 H482.8 V274.5 H481.8 V274.5 H480.8 V274.5 H479.8 V274.5 H478.8 V267.6 H477.8 V267.6 H476.8 V267.6 H475.8 V267.6 H474.8 V267.6 H473.8 V267.6 H472.8 V271.1 H471.8 V267.6 H470.8 V271.1 H469.8 V271.1 H468.8 V271.1 H467.8 V271.1 H466.8 V271.1 H465.8 V271.1 H464.8 V271.1 H463.8 V271.1 H462.8 V271.1 H461.8 V271.1 H460.8 V267.6 H459.8 V267.6 H458.8 V267.6 H457.8 V271.1 H456.8 V271.1 H455.8 V271.1 H454.8 V271.1 H453.8 V271.1 H452.8 V271.1 H451.8 V271.1 H450.8 V267.6 H449.8 V267.6 H448.8 V267.6 H447.8 V267.6 H446.8 V267.6 H445.8 V264.2 H444.8 V264.2 H443.8 V260.7 H442.8 V260.7 H441.8 V264.2 H440.8 V264.2 H439.8 V264.2 H438.8 V264.2 H437.8 V264.2 H436.8 V260.7 H435.8 V260.7 H434.8 V260.7 H433.8 V260.7 H432.8 V260.7 H431.8 V260.7 H430.8 V264.2 H429.8 V264.2 H428.8 V267.6 H427.8 V267.6 H426.8 V267.6 H425.8 V271.1 H424.8 V271.1 H423.8 V274.5 H422.8 V274.5 H421.8 V274.5 H420.8 V274.5 H419.8 V274.5 H418.8 V274.5 H417.8 V278.0 H416.8 V278.0 H415.8 V274.5 H414.8 V274.5 H413.8 V278.0 H412.8 V278.0 H411.8 V278.0 H410.8 V281.4 H409.8 V281.4 H408.8 V281.4 H407.8 V281.4 H406.8 V278.0 H405.8 V281.4 H404.8 V281.4 H403.8 V281.4 H402.8 V281.4 H401.8 V281.4 H400.8 V284.9 H399.8 V284.9 H398.8 V284.9 H397.8 V288.3 H396.8 V284.9 H395.8 V284.9 H394.8 V284.9 H393.8 V284.9 H392.8 V288.3 H391.8 V284.9 H390.8 V291.7 H389.8 V291.7 H388.8 V291.7 H387.8 V288.3 H386.8 V288.3 H385.8 V288.3 H384.8 V288.3 H383.8 V284.9 H382.8 V288.3 H381.8 V288.3 H380.8 V291.7 H379.8 V295.2 H378.8 V295.2 H377.8 V295.2 H376.8 V295.2 H375.8 V291.7 H374.8 V291.7 H373.8 V288.3 H372.8 V291.7 H371.8 V291.7 H370.8 V291.7 H369.8 V291.7 H368.8 V291.7 H367.8 V295.2 H366.8 V295.2 H365.8 V291.7 H364.8 V295.2 H363.8 V295.2 H362.8 V295.2 H361.8 V295.2 H360.8 V295.2 H359.8 V295.2 H358.8 V295.2 H357.8 V295.2 H356.8 V298.6 H355.8 V298.6 H354.8 V298.6 H353.8 V298.6 H352.8 V298.6 H351.8 V298.6 H350.8 V298.6 H349.8 V298.6 H348.8 V302.1 H347.8 V302.1 H346.8 V302.1 H345.8 V298.6 H344.8 V298.6 H343.8 V298.6 H342.8 V298.6 H341.8 V298.6 H340.8 V302.1 H339.8 V302.1 H338.8 V302.1 H337.8 V302.1 H336.8 V302.1 H335.8 V302.1 H334.8 V298.6 H333.8 V298.6 H332.8 V298.6 H331.8 V298.6 H330.8 V298.6 H329.8 V302.1 H328.8 V298.6 H327.8 V298.6 H326.8 V302.1 H325.8 V302.1 H324.8 V302.1 H323.8 V302.1 H322.8 V302.1 H321.8 V302.1 H320.8 V302.1 H319.8 V302.1 H318.8 V305.5 H317.8 V305.5 H316.8 V305.5 H315.8 V305.5 H314.8 V302.1 H313.8 V302.1 H312.8 V298.6 H311.8 V305.5 H310.8 V302.1 H309.8 V302.1 H308.8 V302.1 H307.8 V302.1 H306.8 V302.1 H305.8 V302.1 H304.8 V302.1 H303.8 V302.1 H302.8 V302.1 H301.8 V302.1 H300.8 V305.5 H299.8 V305.5 H298.8 V305.5 H297.8 V298.6 H296.8 V298.6 H295.8 V298.6 H294.8 V298.6 H293.8 V298.6 H292.8 V298.6 H291.8 V298.6 H290.8 V298.6 H289.8 V298.6 H288.8 V302.1 H287.8 V302.1 H286.8 V302.1 H285.8 V302.1 H284.8 V302.1 H283.8 V302.1 H282.8 V302.1 H281.8 V302.1 H280.8 V302.1 H279.8 V302.1 H278.8 V302.1 H277.8 V302.1 H276.8 V302.1 H275.8 V298.6 H274.8 V298.6 H273.8 V302.1 H272.8 V302.1 H271.8 V302.1 H270.8 V298.6 H269.8 V298.6 H268.8 V298.6 H267.8 V298.6 H266.8 V298.6 H265.8 V298.6 H264.8 V298.6 H263.8 V302.1 H262.8 V302.1 H261.8 V302.1 H260.8 V302.1 H259.8 V302.1 H258.8 V298.6 H257.8 V298.6 H256.8 V298.6 H255.8 V298.6 H254.8 V298.6 H253.8 V295.2 H252.8 V298.6 H251.8 V298.6 H250.8 V298.6 H249.8 V298.6 H248.8 V298.6 H247.8 V298.6 H246.8 V298.6 H245.8 V298.6 H244.8 V298.6 H243.8 V302.1 H242.8 V302.1 H241.8 V302.1 H240.8 V298.6 H239.8 V298.6 H238.8 V298.6 H237.8 V298.6 H236.8 V298.6 H235.8 V298.6 H234.8 V298.6 H233.8 V298.6 H232.8 V298.6 H231.8 V298.6 H230.8 V298.6 H229.8 V298.6 H228.8 V295.2 H227.8 V295.2 H226.8 V298.6 H225.8 V298.6 H224.8 V298.6 H223.8 V295.2 H222.8 V291.7 H221.8 V291.7 H220.8 V291.7 H219.8 V291.7 H218.8 V291.7 H217.8 V291.7 H216.8 V291.7 H215.8 V291.7 H214.8 V291.7 H213.8 V288.3 H212.8 V295.2 H211.8 V295.2 H210.8 V288.3 H209.8 V291.7 H208.8 Z" fill="#ff00ff" stroke="#ff00ff" stroke-width="0.6" stroke-linejoin="miter" shape-rendering="crispEdges"/>
<path d="M226.75,283.2 V335.0 M237.00,284.2 V432.0 M261.00,285.9 V332.5 M270.75,286.3 V305.0 M276.00,286.6 V321.0 M279.50,286.8 V312.5 M283.50,287.0 V305.0 M287.00,287.2 V304.0 M290.00,287.4 V305.0 M295.00,287.7 V307.5 M300.75,288.0 V332.5 M305.50,288.0 V315.0 M328.75,287.6 V318.8 M340.00,286.2 V350.0 M356.75,283.6 V328.8 M380.50,277.9 V305.0 M383.75,277.2 V298.8 M388.75,276.2 V305.0 M412.50,268.8 V308.0 M421.50,263.0 V287.5 M427.50,257.0 V312.0 M504.50,257.9 V343.0 M511.00,257.9 V274.0 M528.25,257.6 V298.8 M533.00,257.6 V287.5 M539.25,257.5 V281.0 M558.25,256.7 V325.8 M567.50,256.3 V283.8 M577.50,255.1 V276.0 M582.00,253.4 V276.0 M591.00,252.3 V276.0 M596.75,251.8 V335.0 M602.50,251.5 V308.0 M611.75,251.5 V273.8 M632.50,251.5 V276.0 M640.75,251.5 V305.0 M650.00,251.5 V280.0 M653.25,251.5 V276.0 M668.00,258.4 V276.0 M677.00,258.8 V318.8 M685.00,259.0 V276.0 M690.00,259.0 V312.0 M705.00,259.4 V274.0 M718.75,261.3 V281.0 M743.00,263.0 V370.5 M771.25,254.9 V283.8 M777.50,254.8 V291.2 M791.25,254.2 V274.5 M823.25,252.1 V277.5 M829.50,252.6 V283.8 M838.75,253.5 V273.8 M844.50,254.3 V322.0 M865.00,263.3 V325.8 M887.50,275.0 V339.2 M893.75,269.2 V318.8 M913.75,275.5 V300.8 M922.00,278.8 V294.5 M245.00,285.0 V299.0 M254.00,285.7 V300.0 M313.00,288.0 V303.0 M320.00,288.0 V304.0 M335.00,286.8 V303.0 M346.00,285.5 V301.0 M362.00,282.6 V298.0 M370.00,280.5 V296.0 M395.00,274.5 V289.0 M404.00,271.8 V288.0 M455.00,258.9 V274.0 M465.00,259.3 V275.0 M484.00,258.6 V275.0 M495.00,258.2 V276.0 M520.00,257.8 V276.0 M547.00,257.2 V275.0 M616.00,251.5 V270.0 M625.00,251.5 V271.0 M661.00,258.0 V274.0 M697.00,259.0 V276.0 M728.00,263.0 V279.0 M735.00,263.0 V280.0 M750.00,263.0 V280.0 M783.00,254.7 V273.0 M800.00,252.0 V272.0 M812.00,251.6 V273.0 M856.00,258.0 V277.0 M872.00,268.0 V290.0 M880.00,274.0 V295.0 M901.00,271.2 V290.0 M907.00,272.8 V291.0 " stroke="#ff00ff" stroke-width="1.5" fill="none"/>
<path d="M490.00,259.4 V246.0 M807.00,252.8 V240.0 M813.00,252.6 V244.0 M895.00,270.6 V260.0 M781.00,255.7 V246.0 M585.00,253.8 V245.0 M615.00,252.5 V245.0 M640.00,252.5 V245.0 M330.00,288.4 V280.0 M228.00,284.3 V276.0 M232.00,284.7 V277.0 M519.00,258.8 V250.0 M545.00,258.3 V250.0 M700.00,260.0 V252.0 M725.00,263.4 V255.0 M749.00,264.0 V256.0 M834.00,253.9 V245.0 M843.00,255.1 V244.0 " stroke="#ff00ff" stroke-width="1.3" fill="none"/>
<line x1="208.8" x2="208.8" y1="143.2" y2="256.6" stroke="#2226ae" stroke-width="1.35"/>
<line x1="208.8" x2="208.8" y1="256.6" y2="601.8" stroke="#e0361a" stroke-width="1.35"/>
<line x1="48.4" x2="1044.1" y1="601.8" y2="601.8" stroke="#111" stroke-width="1.7"/>
<rect x="55.4" y="143.2" width="988.6999999999999" height="603.2" fill="none" stroke="#111" stroke-width="1.6"/>
<path d="M71.88,143.2 v5.5 M71.88,741.9 V750.9 M88.36,143.2 v5.5 M88.36,741.9 V750.9 M104.83,143.2 v5.5 M104.83,741.9 V750.9 M121.31,143.2 v5.5 M121.31,741.9 V750.9 M137.79,143.2 v9.5 M137.79,737.4 V755.4 M154.27,143.2 v5.5 M154.27,741.9 V750.9 M170.75,143.2 v5.5 M170.75,741.9 V750.9 M187.23,143.2 v5.5 M187.23,741.9 V750.9 M203.70,143.2 v5.5 M203.70,741.9 V750.9 M220.18,143.2 v9.5 M220.18,737.4 V755.4 M236.66,143.2 v5.5 M236.66,741.9 V750.9 M253.14,143.2 v5.5 M253.14,741.9 V750.9 M269.62,143.2 v5.5 M269.62,741.9 V750.9 M286.10,143.2 v5.5 M286.10,741.9 V750.9 M302.57,143.2 v9.5 M302.57,737.4 V755.4 M319.05,143.2 v5.5 M319.05,741.9 V750.9 M335.53,143.2 v5.5 M335.53,741.9 V750.9 M352.01,143.2 v5.5 M352.01,741.9 V750.9 M368.49,143.2 v5.5 M368.49,741.9 V750.9 M384.97,143.2 v9.5 M384.97,737.4 V755.4 M401.44,143.2 v5.5 M401.44,741.9 V750.9 M417.92,143.2 v5.5 M417.92,741.9 V750.9 M434.40,143.2 v5.5 M434.40,741.9 V750.9 M450.88,143.2 v5.5 M450.88,741.9 V750.9 M467.36,143.2 v9.5 M467.36,737.4 V755.4 M483.84,143.2 v5.5 M483.84,741.9 V750.9 M500.31,143.2 v5.5 M500.31,741.9 V750.9 M516.79,143.2 v5.5 M516.79,741.9 V750.9 M533.27,143.2 v5.5 M533.27,741.9 V750.9 M549.75,143.2 v9.5 M549.75,737.4 V755.4 M566.23,143.2 v5.5 M566.23,741.9 V750.9 M582.71,143.2 v5.5 M582.71,741.9 V750.9 M599.18,143.2 v5.5 M599.18,741.9 V750.9 M615.66,143.2 v5.5 M615.66,741.9 V750.9 M632.14,143.2 v9.5 M632.14,737.4 V755.4 M648.62,143.2 v5.5 M648.62,741.9 V750.9 M665.10,143.2 v5.5 M665.10,741.9 V750.9 M681.58,143.2 v5.5 M681.58,741.9 V750.9 M698.05,143.2 v5.5 M698.05,741.9 V750.9 M714.53,143.2 v9.5 M714.53,737.4 V755.4 M731.01,143.2 v5.5 M731.01,741.9 V750.9 M747.49,143.2 v5.5 M747.49,741.9 V750.9 M763.97,143.2 v5.5 M763.97,741.9 V750.9 M780.45,143.2 v5.5 M780.45,741.9 V750.9 M796.92,143.2 v9.5 M796.92,737.4 V755.4 M813.40,143.2 v5.5 M813.40,741.9 V750.9 M829.88,143.2 v5.5 M829.88,741.9 V750.9 M846.36,143.2 v5.5 M846.36,741.9 V750.9 M862.84,143.2 v5.5 M862.84,741.9 V750.9 M879.32,143.2 v9.5 M879.32,737.4 V755.4 M895.79,143.2 v5.5 M895.79,741.9 V750.9 M912.27,143.2 v5.5 M912.27,741.9 V750.9 M928.75,143.2 v5.5 M928.75,741.9 V750.9 M945.23,143.2 v5.5 M945.23,741.9 V750.9 M961.71,143.2 v9.5 M961.71,737.4 V755.4 M978.19,143.2 v5.5 M978.19,741.9 V750.9 M994.66,143.2 v5.5 M994.66,741.9 V750.9 M1011.14,143.2 v5.5 M1011.14,741.9 V750.9 M1027.62,143.2 v5.5 M1027.62,741.9 V750.9 M55.40,746.4 v9 M1044.10,746.4 v9 M48.20,739.60 H62.60 M1036.90,739.60 H1044.10 M52.00,722.38 H58.80 M1040.70,722.38 H1044.10 M52.00,705.15 H58.80 M1040.70,705.15 H1044.10 M52.00,687.92 H58.80 M1040.70,687.92 H1044.10 M48.20,670.70 H62.60 M1036.90,670.70 H1044.10 M52.00,653.47 H58.80 M1040.70,653.47 H1044.10 M52.00,636.25 H58.80 M1040.70,636.25 H1044.10 M52.00,619.02 H58.80 M1040.70,619.02 H1044.10 M48.20,601.80 H62.60 M1036.90,601.80 H1044.10 M52.00,584.57 H58.80 M1040.70,584.57 H1044.10 M52.00,567.35 H58.80 M1040.70,567.35 H1044.10 M52.00,550.12 H58.80 M1040.70,550.12 H1044.10 M48.20,532.90 H62.60 M1036.90,532.90 H1044.10 M52.00,515.67 H58.80 M1040.70,515.67 H1044.10 M52.00,498.45 H58.80 M1040.70,498.45 H1044.10 M52.00,481.22 H58.80 M1040.70,481.22 H1044.10 M48.20,464.00 H62.60 M1036.90,464.00 H1044.10 M52.00,446.77 H58.80 M1040.70,446.77 H1044.10 M52.00,429.55 H58.80 M1040.70,429.55 H1044.10 M52.00,412.32 H58.80 M1040.70,412.32 H1044.10 M48.20,395.10 H62.60 M1036.90,395.10 H1044.10 M52.00,377.87 H58.80 M1040.70,377.87 H1044.10 M52.00,360.65 H58.80 M1040.70,360.65 H1044.10 M52.00,343.42 H58.80 M1040.70,343.42 H1044.10 M48.20,326.20 H62.60 M1036.90,326.20 H1044.10 M52.00,308.97 H58.80 M1040.70,308.97 H1044.10 M52.00,291.75 H58.80 M1040.70,291.75 H1044.10 M52.00,274.52 H58.80 M1040.70,274.52 H1044.10 M48.20,257.30 H62.60 M1036.90,257.30 H1044.10 M52.00,240.07 H58.80 M1040.70,240.07 H1044.10 M52.00,222.85 H58.80 M1040.70,222.85 H1044.10 M52.00,205.62 H58.80 M1040.70,205.62 H1044.10 M48.20,188.40 H62.60 M1036.90,188.40 H1044.10 M52.00,171.17 H58.80 M1040.70,171.17 H1044.10 M52.00,153.95 H58.80 M1040.70,153.95 H1044.10 " stroke="#111" stroke-width="1.6" fill="none"/>
<line x1="58.3" x2="85.3" y1="124.8" y2="124.8" stroke="#e63030" stroke-width="1.9"/>
<line x1="136.1" x2="163" y1="124.8" y2="124.8" stroke="#e020e6" stroke-width="1.9"/>
<line x1="213.2" x2="239.8" y1="124.8" y2="124.8" stroke="#1c1ce0" stroke-width="1.9"/>
<line x1="289.5" x2="318.2" y1="124.8" y2="124.8" stroke="#2fd62f" stroke-width="1.9"/>
<path d="M920.5,274 H934.5 M927.6,264.5 V282.5" stroke="#000" stroke-width="1.5" fill="none"/></svg>
<span class="t" style="left:93.20px;top:119.13px;font-size:12.6px;color:#111;transform:scaleX(0.8067);-webkit-text-stroke:0.25px #111;">BER</span>
<span class="t" style="left:170.60px;top:119.13px;font-size:12.6px;color:#111;transform:scaleX(0.8270);-webkit-text-stroke:0.25px #111;">SNR</span>
<span class="t" style="left:248.20px;top:119.13px;font-size:12.6px;color:#111;transform:scaleX(0.8339);-webkit-text-stroke:0.25px #111;">Quality</span>
<span class="t" style="left:325.20px;top:119.13px;font-size:12.6px;color:#111;transform:scaleX(0.8665);-webkit-text-stroke:0.25px #111;">Level</span>
<span class="t" style="left:17.80px;top:175.18px;font-size:22px;color:#111;transform:scaleX(0.7847);-webkit-text-stroke:0.35px #111;">12</span>
<span class="t" style="left:18.30px;top:244.08px;font-size:22px;color:#111;transform:scaleX(0.7438);-webkit-text-stroke:0.35px #111;">10</span>
<span class="t" style="left:22.00px;top:312.98px;font-size:22px;color:#111;transform:scaleX(0.8828);-webkit-text-stroke:0.35px #111;">8</span>
<span class="t" style="left:22.00px;top:381.88px;font-size:22px;color:#111;transform:scaleX(0.8828);-webkit-text-stroke:0.35px #111;">6</span>
<span class="t" style="left:22.00px;top:450.78px;font-size:22px;color:#111;transform:scaleX(0.8828);-webkit-text-stroke:0.35px #111;">4</span>
<span class="t" style="left:22.00px;top:519.68px;font-size:22px;color:#111;transform:scaleX(0.8828);-webkit-text-stroke:0.35px #111;">2</span>
<span class="t" style="left:22.00px;top:588.58px;font-size:22px;color:#111;transform:scaleX(0.8828);-webkit-text-stroke:0.35px #111;">0</span>
<span class="t" style="left:19.05px;top:657.48px;font-size:22px;color:#111;transform:scaleX(0.8538);-webkit-text-stroke:0.35px #111;">-2</span>
<span class="t" style="left:19.05px;top:726.38px;font-size:22px;color:#111;transform:scaleX(0.8538);-webkit-text-stroke:0.35px #111;">-4</span>
<div class="b" style="left:1055.80px;top:92.60px;width:139.00px;height:642.00px;border:1px solid #dcdcdc;border-radius:3px;background:#f3f3f3;"></div>
<div class="b" style="left:1059.50px;top:86.00px;width:89.00px;height:12.00px;background:#f0f0f0;"></div>
<span class="t" style="left:1061.90px;top:88.03px;font-size:10.6px;color:#1a1a9a;transform:scaleX(0.7821);-webkit-text-stroke:0.45px #1a1a9a;">Transponder (AU) [BS]</span>
<span class="t" style="left:1062.00px;top:115.47px;font-size:10.2px;color:#2c2c2c;transform:scaleX(0.8369);-webkit-text-stroke:0.3px #2c2c2c;">Frequency:</span>
<span class="t" style="left:1123.30px;top:114.67px;font-size:10.2px;color:#186618;font-weight:bold;transform:scaleX(0.8314);-webkit-text-stroke:0.3px #186618;">11602,571 MHz</span>
<span class="t" style="left:1062.00px;top:148.64px;font-size:10.2px;color:#2c2c2c;transform:scaleX(0.8659);-webkit-text-stroke:0.3px #2c2c2c;">Polarization:</span>
<span class="t" style="left:1123.30px;top:147.84px;font-size:10.2px;color:#186618;font-weight:bold;transform:scaleX(0.8223);-webkit-text-stroke:0.3px #186618;">Horizontal</span>
<span class="t" style="left:1062.00px;top:181.81px;font-size:10.2px;color:#2c2c2c;transform:scaleX(0.8167);-webkit-text-stroke:0.3px #2c2c2c;">Symbol Rate:</span>
<span class="t" style="left:1123.30px;top:181.01px;font-size:10.2px;color:#186618;font-weight:bold;transform:scaleX(0.7936);-webkit-text-stroke:0.3px #186618;">170,991 KS/s</span>
<span class="t" style="left:1062.00px;top:214.98px;font-size:10.2px;color:#2c2c2c;transform:scaleX(0.8592);-webkit-text-stroke:0.3px #2c2c2c;">Standard:</span>
<span class="t" style="left:1123.30px;top:214.18px;font-size:10.2px;color:#186618;font-weight:bold;transform:scaleX(0.7645);-webkit-text-stroke:0.3px #186618;">DVB-S2</span>
<span class="t" style="left:1062.00px;top:248.15px;font-size:10.2px;color:#2c2c2c;transform:scaleX(0.9217);-webkit-text-stroke:0.3px #2c2c2c;">Modulation:</span>
<span class="t" style="left:1123.30px;top:247.35px;font-size:10.2px;color:#186618;font-weight:bold;transform:scaleX(0.7369);-webkit-text-stroke:0.3px #186618;">QPSK-S2</span>
<span class="t" style="left:1062.00px;top:281.32px;font-size:10.2px;color:#2c2c2c;transform:scaleX(0.6887);-webkit-text-stroke:0.3px #2c2c2c;">FEC:</span>
<span class="t" style="left:1123.30px;top:280.52px;font-size:10.2px;color:#186618;font-weight:bold;transform:scaleX(0.8958);-webkit-text-stroke:0.3px #186618;">3/4</span>
<span class="t" style="left:1062.00px;top:314.49px;font-size:10.2px;color:#2c2c2c;transform:scaleX(0.8959);-webkit-text-stroke:0.3px #2c2c2c;">RollOff:</span>
<span class="t" style="left:1123.30px;top:313.69px;font-size:10.2px;color:#186618;font-weight:bold;transform:scaleX(0.7859);-webkit-text-stroke:0.3px #186618;">0.20</span>
<span class="t" style="left:1062.00px;top:347.66px;font-size:10.2px;color:#2c2c2c;transform:scaleX(0.8688);-webkit-text-stroke:0.3px #2c2c2c;">Pilot:</span>
<span class="t" style="left:1123.30px;top:346.86px;font-size:10.2px;color:#186618;font-weight:bold;transform:scaleX(0.8170);-webkit-text-stroke:0.3px #186618;">ON</span>
<span class="t" style="left:1062.00px;top:380.83px;font-size:10.2px;color:#2c2c2c;transform:scaleX(0.8326);-webkit-text-stroke:0.3px #2c2c2c;">Spectrum:</span>
<span class="t" style="left:1123.30px;top:380.03px;font-size:10.2px;color:#186618;font-weight:bold;transform:scaleX(0.8116);-webkit-text-stroke:0.3px #186618;">Inverted</span>
<span class="t" style="left:1062.00px;top:414.00px;font-size:10.2px;color:#2c2c2c;transform:scaleX(0.8026);-webkit-text-stroke:0.3px #2c2c2c;">Frame Type:</span>
<span class="t" style="left:1123.30px;top:413.20px;font-size:10.2px;color:#186618;font-weight:bold;transform:scaleX(0.8035);-webkit-text-stroke:0.3px #186618;">Long Frame</span>
<span class="t" style="left:1062.00px;top:447.17px;font-size:10.2px;color:#2c2c2c;transform:scaleX(0.8621);-webkit-text-stroke:0.3px #2c2c2c;">Code Mode:</span>
<span class="t" style="left:1123.30px;top:446.37px;font-size:10.2px;color:#186618;font-weight:bold;transform:scaleX(0.7792);-webkit-text-stroke:0.3px #186618;">CCM</span>
<span class="t" style="left:1062.00px;top:480.34px;font-size:10.2px;color:#2c2c2c;transform:scaleX(0.8336);-webkit-text-stroke:0.3px #2c2c2c;">Stream type:</span>
<span class="t" style="left:1123.30px;top:479.54px;font-size:10.2px;color:#186618;font-weight:bold;transform:scaleX(0.7909);-webkit-text-stroke:0.3px #186618;">Transport</span>
<span class="t" style="left:1062.00px;top:513.51px;font-size:10.2px;color:#2c2c2c;transform:scaleX(0.6634);-webkit-text-stroke:0.3px #2c2c2c;">ISSYI</span>
<span class="t" style="left:1123.30px;top:512.71px;font-size:10.2px;color:#186618;font-weight:bold;transform:scaleX(0.7159);-webkit-text-stroke:0.3px #186618;">OFF</span>
<span class="t" style="left:1062.00px;top:546.68px;font-size:10.2px;color:#2c2c2c;transform:scaleX(0.7673);-webkit-text-stroke:0.3px #2c2c2c;">NPD:</span>
<span class="t" style="left:1123.30px;top:545.88px;font-size:10.2px;color:#186618;font-weight:bold;transform:scaleX(0.7159);-webkit-text-stroke:0.3px #186618;">OFF</span>
<span class="t" style="left:1062.00px;top:579.85px;font-size:10.2px;color:#2c2c2c;transform:scaleX(0.7584);-webkit-text-stroke:0.3px #2c2c2c;">RF Level:</span>
<span class="t" style="left:1123.30px;top:579.05px;font-size:10.2px;color:#186618;font-weight:bold;transform:scaleX(0.8076);-webkit-text-stroke:0.3px #186618;">-42 dBm</span>
<span class="t" style="left:1062.00px;top:613.02px;font-size:10.2px;color:#2c2c2c;transform:scaleX(0.8021);-webkit-text-stroke:0.3px #2c2c2c;">BitRate:</span>
<span class="t" style="left:1123.30px;top:612.22px;font-size:10.2px;color:#186618;font-weight:bold;transform:scaleX(0.8561);-webkit-text-stroke:0.3px #186618;">0,247 Mbit/s</span>
<span class="t" style="left:1062.00px;top:646.19px;font-size:10.2px;color:#2c2c2c;transform:scaleX(0.8723);-webkit-text-stroke:0.3px #2c2c2c;">CarrierWidth:</span>
<span class="t" style="left:1123.30px;top:645.39px;font-size:10.2px;color:#186618;font-weight:bold;transform:scaleX(0.8313);-webkit-text-stroke:0.3px #186618;">0,204 MHz</span>
<span class="t" style="left:1062.00px;top:694.97px;font-size:10.2px;color:#2c2c2c;transform:scaleX(0.7748);-webkit-text-stroke:0.3px #2c2c2c;">MIS (0):</span>
<div class="b" style="left:1123.00px;top:688.70px;width:56.50px;height:19.40px;background:#fdfdfd;border-radius:2px;"></div>
<span class="t" style="left:1125.90px;top:694.43px;font-size:10.6px;color:#444;transform:scaleX(0.8145);">Single</span>
<svg width="10" height="8" viewBox="0 0 10 8" style="left:1168px;top:695.5px"><path d="M2 2 L5.1 5.6 L8.2 2" stroke="#8a8a8a" stroke-width="0.9" fill="none"/></svg>
<div class="b" style="left:1055.20px;top:743.00px;width:138.60px;height:25.20px;background:#fdfdfd;border:1px solid #d2d2d2;border-bottom-color:#bdbdbd;border-radius:4px;"></div>
<svg width="16" height="18" viewBox="0 0 16 18" style="left:1117.5px;top:747px"><rect x="1.3" y="1.3" width="12.4" height="14.6" fill="#f4f4f4" stroke="#9a9a9a" stroke-width="1"/><rect x="1.8" y="4.6" width="11.4" height="4" fill="#2a6fd2"/><rect x="1.8" y="8.6" width="11.4" height="2.4" fill="#fafafa"/><rect x="1.8" y="11" width="11.4" height="4.4" fill="#e4d8c8"/></svg>
<div class="b" style="left:9.00px;top:778.30px;width:96.60px;height:18.60px;background:linear-gradient(180deg,#8c8c8c,#a4a4a4);border-radius:2px;"></div>
<div class="b" style="left:10.00px;top:779.30px;width:94.60px;height:16.60px;background:linear-gradient(180deg,#fff 0%,#fff 5%,#f6fff6 7%,#c6f8c6 54%,#4cba4c 58%,#7cf07c 100%);"></div>
<span class="t" style="left:11.40px;top:783.98px;font-size:10.3px;color:#0a1e0a;font-weight:bold;transform:scaleX(0.7464);-webkit-text-stroke:0.3px #0a1e0a;">Present</span>
<div class="b" style="left:9.00px;top:802.40px;width:96.60px;height:18.60px;background:linear-gradient(180deg,#8c8c8c,#a4a4a4);border-radius:2px;"></div>
<div class="b" style="left:10.00px;top:803.40px;width:94.60px;height:16.60px;background:linear-gradient(180deg,#fff 0%,#fff 5%,#f6fff6 7%,#c6f8c6 54%,#4cba4c 58%,#7cf07c 100%);"></div>
<span class="t" style="left:11.40px;top:808.08px;font-size:10.3px;color:#0a1e0a;font-weight:bold;transform:scaleX(0.7155);-webkit-text-stroke:0.3px #0a1e0a;">Lock</span>
<div class="b" style="left:109.20px;top:778.30px;width:490.20px;height:18.60px;background:linear-gradient(180deg,#8c8c8c,#a4a4a4);border-radius:2px;"></div>
<div class="b" style="left:110.20px;top:779.30px;width:48.80px;height:16.60px;background:linear-gradient(180deg,#fff 0%,#fff 5%,#fffafa 7%,#fdecec 54%,#de9292 58%,#f6b6b6 100%);"></div>
<div class="b" style="left:159.00px;top:779.30px;width:177.00px;height:16.60px;background:linear-gradient(180deg,#fff 0%,#fff 5%,#ffffee 7%,#ffffcc 54%,#c2be56 58%,#f2f272 100%);"></div>
<div class="b" style="left:336.00px;top:779.30px;width:262.40px;height:16.60px;background:linear-gradient(180deg,#fff 0%,#fff 5%,#f0f0f0 7%,#dcdcdc 54%,#b4b4b4 58%,#d2d2d2 100%);"></div>
<span class="t" style="left:114.00px;top:783.98px;font-size:10.3px;color:#2a0a0a;font-weight:bold;transform:scaleX(0.7588);-webkit-text-stroke:0.3px #2a0a0a;">Level: 46%</span>
<div class="b" style="left:109.20px;top:802.40px;width:490.20px;height:18.60px;background:linear-gradient(180deg,#8c8c8c,#a4a4a4);border-radius:2px;"></div>
<div class="b" style="left:110.20px;top:803.40px;width:48.80px;height:16.60px;background:linear-gradient(180deg,#fff 0%,#fff 5%,#fffafa 7%,#fdecec 54%,#de9292 58%,#f6b6b6 100%);"></div>
<div class="b" style="left:159.00px;top:803.40px;width:196.00px;height:16.60px;background:linear-gradient(180deg,#fff 0%,#fff 5%,#ffffee 7%,#ffffcc 54%,#c2be56 58%,#f2f272 100%);"></div>
<div class="b" style="left:355.00px;top:803.40px;width:243.40px;height:16.60px;background:linear-gradient(180deg,#fff 0%,#fff 5%,#f6fff6 7%,#c6f8c6 54%,#4cba4c 58%,#7cf07c 100%);"></div>
<span class="t" style="left:114.00px;top:808.08px;font-size:10.3px;color:#2a0a0a;font-weight:bold;transform:scaleX(0.7551);-webkit-text-stroke:0.3px #2a0a0a;">Quality: 100%</span>
<div class="b" style="left:603.00px;top:778.30px;width:243.40px;height:18.60px;background:linear-gradient(180deg,#8c8c8c,#a4a4a4);border-radius:2px;"></div>
<div class="b" style="left:604.00px;top:779.30px;width:51.00px;height:16.60px;background:linear-gradient(180deg,#fff 0%,#fff 5%,#fffafa 7%,#fdecec 54%,#de9292 58%,#f6b6b6 100%);"></div>
<div class="b" style="left:655.00px;top:779.30px;width:87.00px;height:16.60px;background:linear-gradient(180deg,#fff 0%,#fff 5%,#ffffee 7%,#ffffcc 54%,#c2be56 58%,#f2f272 100%);"></div>
<div class="b" style="left:742.00px;top:779.30px;width:103.40px;height:16.60px;background:linear-gradient(180deg,#fff 0%,#fff 5%,#f6fff6 7%,#c6f8c6 54%,#4cba4c 58%,#7cf07c 100%);"></div>
<span class="t" style="left:605.60px;top:783.98px;font-size:10.3px;color:#2a0a0a;font-weight:bold;transform:scaleX(0.7510);-webkit-text-stroke:0.3px #2a0a0a;">preBER: &lt;1.0E-7</span>
<div class="b" style="left:603.00px;top:802.40px;width:490.00px;height:18.60px;background:linear-gradient(180deg,#8c8c8c,#a4a4a4);border-radius:2px;"></div>
<div class="b" style="left:604.00px;top:803.40px;width:98.00px;height:16.60px;background:linear-gradient(180deg,#fff 0%,#fff 5%,#fffafa 7%,#fdecec 54%,#de9292 58%,#f6b6b6 100%);"></div>
<div class="b" style="left:702.00px;top:803.40px;width:122.40px;height:16.60px;background:linear-gradient(180deg,#fff 0%,#fff 5%,#ffffee 7%,#ffffcc 54%,#c2be56 58%,#f2f272 100%);"></div>
<div class="b" style="left:824.40px;top:803.40px;width:7.60px;height:16.60px;background:linear-gradient(180deg,#fff 0%,#fff 5%,#f6fff6 7%,#c6f8c6 54%,#4cba4c 58%,#7cf07c 100%);"></div>
<div class="b" style="left:832.00px;top:803.40px;width:260.00px;height:16.60px;background:linear-gradient(180deg,#fff 0%,#fff 5%,#f0f0f0 7%,#dcdcdc 54%,#b4b4b4 58%,#d2d2d2 100%);"></div>
<span class="t" style="left:608.00px;top:808.08px;font-size:10.3px;color:#2a0a0a;font-weight:bold;transform:scaleX(0.7857);-webkit-text-stroke:0.3px #2a0a0a;">SNR: 9,3 dB (Margin: 5,3 dB | OK)</span>
<div class="b" style="left:849.60px;top:778.30px;width:243.40px;height:18.60px;background:linear-gradient(180deg,#8c8c8c,#a4a4a4);border-radius:2px;"></div>
<div class="b" style="left:850.60px;top:779.30px;width:51.40px;height:16.60px;background:linear-gradient(180deg,#fff 0%,#fff 5%,#fffafa 7%,#fdecec 54%,#de9292 58%,#f6b6b6 100%);"></div>
<div class="b" style="left:902.00px;top:779.30px;width:86.60px;height:16.60px;background:linear-gradient(180deg,#fff 0%,#fff 5%,#ffffee 7%,#ffffcc 54%,#c2be56 58%,#f2f272 100%);"></div>
<div class="b" style="left:988.60px;top:779.30px;width:103.40px;height:16.60px;background:linear-gradient(180deg,#fff 0%,#fff 5%,#f6fff6 7%,#c6f8c6 54%,#4cba4c 58%,#7cf07c 100%);"></div>
<span class="t" style="left:852.00px;top:783.98px;font-size:10.3px;color:#2a0a0a;font-weight:bold;transform:scaleX(0.7454);-webkit-text-stroke:0.3px #2a0a0a;">BER: &lt;1.0E-7</span>
<div class="b" style="left:1096.40px;top:778.30px;width:96.60px;height:18.60px;background:linear-gradient(180deg,#8c8c8c,#a4a4a4);border-radius:2px;"></div>
<div class="b" style="left:1097.40px;top:779.30px;width:94.60px;height:16.60px;background:linear-gradient(180deg,#fff 0%,#fff 5%,#f6fff6 7%,#c6f8c6 54%,#4cba4c 58%,#7cf07c 100%);"></div>
<span class="t" style="left:1099.00px;top:783.98px;font-size:10.3px;color:#0a1e0a;font-weight:bold;transform:scaleX(0.8074);-webkit-text-stroke:0.3px #0a1e0a;">Input (~282 Kbps)</span>
<div class="b" style="left:1096.40px;top:802.40px;width:96.60px;height:18.60px;background:linear-gradient(180deg,#8c8c8c,#a4a4a4);border-radius:2px;"></div>
<div class="b" style="left:1097.40px;top:803.40px;width:94.60px;height:16.60px;background:linear-gradient(180deg,#fff 0%,#fff 5%,#f6fff6 7%,#c6f8c6 54%,#4cba4c 58%,#7cf07c 100%);"></div>
<span class="t" style="left:1099.00px;top:808.08px;font-size:10.3px;color:#0a1e0a;font-weight:bold;transform:scaleX(0.7037);-webkit-text-stroke:0.3px #0a1e0a;">Sync TS</span>
<div class="b" style="left:0.00px;top:827.00px;width:1200.00px;height:1.00px;background:#d9d3dc;"></div>
<div class="b" style="left:0.00px;top:828.00px;width:1200.00px;height:22.00px;background:#f3f3f3;"></div>
<div class="b" style="left:393.40px;top:830.00px;width:1.30px;height:18.00px;background:#8c8c8c;"></div>
<div class="b" style="left:791.80px;top:830.00px;width:1.30px;height:18.00px;background:#8c8c8c;"></div>
<div class="b" style="left:1188.00px;top:830.00px;width:1.30px;height:18.00px;background:#8c8c8c;"></div>
<span class="t" style="left:142.40px;top:835.00px;font-size:10.4px;color:#111;font-weight:bold;transform:scaleX(0.8418);-webkit-text-stroke:0.25px #111;">Locked -&gt; Uptime: 24:07:10</span>
<span class="t" style="left:548.40px;top:835.00px;font-size:10.4px;color:#111;font-weight:bold;transform:scaleX(0.8048);-webkit-text-stroke:0.25px #111;">SYNC 0 | TEI 12 | CC 22</span>
<span class="t" style="left:912.00px;top:835.00px;font-size:10.4px;color:#111;font-weight:bold;transform:scaleX(0.8259);-webkit-text-stroke:0.25px #111;">Best signal: 10,4 dB (2024-08-21 14:01)</span>
<svg width="10" height="12" viewBox="0 0 10 12" style="left:1190px;top:838px"><g fill="#8c8c8c"><rect x="6.5" y="0.5" width="1.4" height="1.4"/><rect x="3.5" y="3.5" width="1.4" height="1.4"/><rect x="6.5" y="3.5" width="1.4" height="1.4"/><rect x="0.5" y="6.5" width="1.4" height="1.4"/><rect x="3.5" y="6.5" width="1.4" height="1.4"/><rect x="6.5" y="6.5" width="1.4" height="1.4"/></g></svg>
<div class="b" style="left:0.00px;top:845.00px;width:5.00px;height:5.00px;background:radial-gradient(circle at 5px 0px,rgba(0,0,0,0) 3.8px,#333 5px);"></div>
<span class="t" style="left:699.00px;top:58.88px;font-size:14.2px;color:#111;-webkit-text-stroke:0.3px #111;">PF Prodelin 450 cm / Lucenec-Slovakia</span>
<span class="t" style="left:698.60px;top:81.38px;font-size:14.2px;color:#111;transform:scaleX(1.0549);-webkit-text-stroke:0.3px #111;">f=11602,760 MHz_H_ : Atlantis Radio</span>
<span class="t" style="left:727.10px;top:104.98px;font-size:14.2px;color:#111;transform:scaleX(1.0290);-webkit-text-stroke:0.3px #111;">Locked Uptime : 24:07:10</span>
<div class="b" style="left:573.30px;top:88.60px;width:53.40px;height:53.20px;background:#fff;"></div>
<svg width="54" height="54" viewBox="0 0 54 54" style="left:573px;top:88.4px">
<path d="M9.18,44.60 A23.9,23.9 0 0 1 43.80,11.71" fill="none" stroke="#16165e" stroke-width="1.25"/>
<path d="M50.81,32.64 A23.9,23.9 0 0 1 45.22,44.60 L10.68,44.60" fill="none" stroke="#16165e" stroke-width="1.25"/>
<path d="M44.68,12.60 A23.9,23.9 0 0 1 51.07,30.15" fill="none" stroke="#16165e" stroke-width="2"/>
<path d="M42.65,16.83 A19.6,19.6 0 0 1 46.79,28.22" fill="none" stroke="#c8161e" stroke-width="1.8"/>
<path d="M39.82,19.73 A15.6,15.6 0 0 1 42.71,27.27" fill="none" stroke="#c8161e" stroke-width="1.8"/>
<path d="M18.9,9.6 L31.8,41.8 M19.9,9.4 L26.2,21.8 M18.7,9.6 L20.6,29.4 L21.2,31.8 M21.2,31.8 L30.4,40.6 M21.2,31.8 L17.4,35.4" fill="none" stroke="#26266a" stroke-width="0.9"/>
<circle cx="16.2" cy="35.2" r="2.3" fill="none" stroke="#26266a" stroke-width="0.9"/>
<path d="M16.6,37.6 L18.2,42 L10.4,44.6 M18.2,42 L22.2,44.4" fill="none" stroke="#26266a" stroke-width="0.9"/>
<path d="M28.6,25.0 L37.2,25.0 L35.2,28.2 Z" fill="#26266a"/>
</svg>
<span class="t" style="left:575.00px;top:135.17px;font-size:7.6px;color:#b8141c;font-weight:bold;transform:scaleX(1.0567);font-family:'Liberation Serif',serif;-webkit-text-stroke:0.3px #b8141c;">DX</span>
<span class="t" style="left:586.60px;top:135.17px;font-size:7.6px;color:#16165e;font-weight:bold;transform:scaleX(0.8872);font-family:'Liberation Serif',serif;-webkit-text-stroke:0.3px #16165e;">SATCS.COM</span>
<div class="b" style="left:928.60px;top:286.40px;width:190.60px;height:18.40px;background:#fff;border-radius:2.5px;box-shadow:1px 1.5px 2.5px rgba(0,0,0,.45),0 0 0 0.5px rgba(0,0,0,.12);"></div>
<span class="t" style="left:932.50px;top:289.68px;font-size:11.6px;color:#454545;transform:scaleX(0.7297);">2024-08-21 17.50.30, value: 9,39999961853027</span>
</div>
</body></html>
